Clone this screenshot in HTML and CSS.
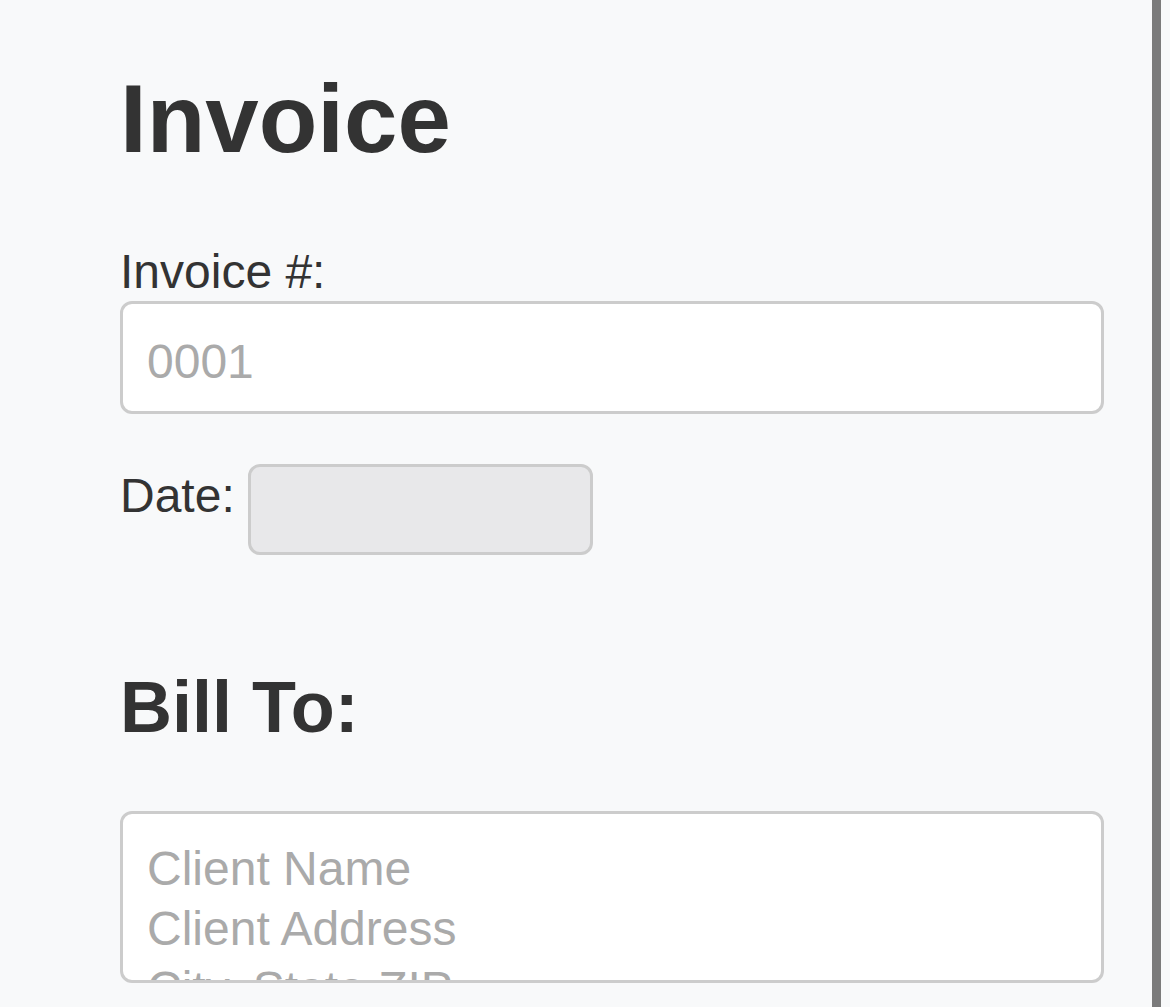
FILE: index.html
```html
<!DOCTYPE html>
<html lang="en">
<head>
<meta charset="utf-8">
<title>Invoice</title>
<link rel="stylesheet" href="styles.css">
</head>
<body>
<div class="page">
  <h1 class="title">Invoice</h1>
  <div class="field">
    <label class="field-label" for="num">Invoice #:</label>
    <input class="text-input" id="num" type="text" placeholder="0001">
  </div>
  <div class="date-row">
    <label class="date-label" for="date">Date:</label>
    <input class="date-input" id="date" type="text">
  </div>
  <h2 class="section-title">Bill To:</h2>
  <textarea class="address" placeholder="Client Name&#10;Client Address&#10;City, State ZIP"></textarea>
</div>
<div class="scroll-bar"></div>
</body>
</html>
```

FILE: styles.css
```css
html, body {
  margin: 0;
  padding: 0;
  overflow: hidden;
  background: #f8f9fa;
}

body {
  font-family: "Liberation Sans", Helvetica, Arial, sans-serif;
  color: #333;
}

.page {
  width: 984px;
  padding: 0 0 0 120px;
  display: flex;
  flex-direction: column;
}

.title {
  font-size: 96px;
  font-weight: bold;
  line-height: 110px;
  margin: 64px 0 70px;
}

.field {
  display: flex;
  flex-direction: column;
}

.field-label {
  font-size: 48px;
  line-height: 55px;
  margin-bottom: 2px;
}

.text-input {
  box-sizing: border-box;
  width: 984px;
  height: 113px;
  margin: 0;
  border: 3px solid #ccc;
  border-radius: 12px;
  padding: 30px 24px 22px;
  font-family: inherit;
  font-size: 48px;
  line-height: 55px;
  color: #333;
  background: #fff;
  outline: none;
}

.text-input::placeholder,
.address::placeholder {
  color: #aaa;
  opacity: 1;
}

.date-row {
  display: flex;
  align-items: flex-start;
  gap: 13px;
  margin-top: 50px;
}

.date-label {
  font-size: 48px;
  line-height: 55px;
  margin-top: 4px;
}

.date-input {
  box-sizing: border-box;
  width: 345px;
  height: 91px;
  margin: 0;
  border: 3px solid #ccc;
  border-radius: 12px;
  background: #e8e8ea;
  padding: 0 24px;
  font-family: inherit;
  font-size: 48px;
  outline: none;
}

.section-title {
  font-size: 72px;
  font-weight: bold;
  line-height: 83px;
  margin: 111px 0 62px;
}

.address {
  box-sizing: border-box;
  width: 984px;
  height: 172px;
  margin: 0;
  border: 3px solid #ccc;
  border-radius: 12px;
  padding: 25px 24px 22px;
  font-family: inherit;
  font-size: 48px;
  line-height: 60px;
  color: #333;
  background: #fff;
  resize: none;
  overflow: hidden;
  outline: none;
  display: block;
}

.scroll-bar {
  position: fixed;
  top: 0;
  bottom: 0;
  left: 1152px;
  width: 9px;
  background: #7b7b7b;
}
```
